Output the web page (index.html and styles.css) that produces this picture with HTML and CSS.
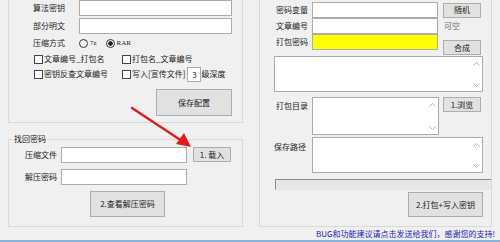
FILE: index.html
```html
<!DOCTYPE html>
<html lang="zh-CN">
<head>
  <meta charset="UTF-8">
  <title>打包工具</title>
  <link rel="stylesheet" href="styles.css">
</head>
<body>
<div class="app">
  <div class="panes">
    <!-- left side -->
    <div class="pane left">
      <div class="group config">
        <div class="field-row">
          <span class="lbl">算法密钥</span>
          <div class="box"></div>
        </div>
        <div class="field-row gap2">
          <span class="lbl">部分明文</span>
          <div class="box"></div>
        </div>
        <div class="option-row">
          <span class="lbl">压缩方式</span>
          <span class="radio"></span><span class="opt-text">7z</span>
          <span class="radio on"></span><span class="opt-text">RAR</span>
        </div>
        <div class="check-row r4">
          <span class="check"><i></i>文章编号_打包名</span>
          <span class="check"><i></i>打包名_文章编号</span>
        </div>
        <div class="check-row r5">
          <span class="check"><i></i>密钥反查文章编号</span>
          <span class="check"><i></i>写入[宣传文件]<span class="tiny-box">3</span>级深度</span>
        </div>
        <div class="btn-row">
          <button class="btn big">保存配置</button>
        </div>
      </div>

      <fieldset class="group recover">
        <legend>找回密码</legend>
        <div class="field-row">
          <span class="lbl">压缩文件</span>
          <div class="box file"></div>
          <button class="btn small load">1. 载入</button>
        </div>
        <div class="field-row gap6">
          <span class="lbl">解压密码</span>
          <div class="box file"></div>
        </div>
        <button class="btn big view">2.查看解压密码</button>
      </fieldset>
    </div>

    <!-- right side -->
    <div class="pane right">
      <div class="group pack">
        <div class="field-row">
          <span class="lbl">密码变量</span>
          <div class="box mid"></div>
          <button class="btn small">随机</button>
        </div>
        <div class="field-row">
          <span class="lbl">文章编号</span>
          <div class="box mid"></div>
          <span class="hint">可空</span>
        </div>
        <div class="field-row">
          <span class="lbl">打包密码</span>
          <div class="box mid yellow"></div>
          <button class="btn small low">合成</button>
        </div>
        <div class="memo full">
          <div class="memo-body"></div>
          <div class="scroll"><svg viewBox="0 0 7 4"><path d="M0.5 3.5L3.5 0.5L6.5 3.5"/></svg><svg viewBox="0 0 7 4"><path d="M0.5 0.5L3.5 3.5L6.5 0.5"/></svg></div>
        </div>
        <div class="memo-row dir">
          <span class="lbl top">打包目录</span>
          <div class="memo narrow">
            <div class="memo-body"></div>
            <div class="scroll"><svg viewBox="0 0 7 4"><path d="M0.5 3.5L3.5 0.5L6.5 3.5"/></svg><svg viewBox="0 0 7 4"><path d="M0.5 0.5L3.5 3.5L6.5 0.5"/></svg></div>
          </div>
          <button class="btn small">1.浏览</button>
        </div>
        <div class="memo-row save">
          <span class="lbl top flush">保存路径</span>
          <div class="memo wide">
            <div class="memo-body"></div>
            <div class="scroll"><svg viewBox="0 0 7 4"><path d="M0.5 3.5L3.5 0.5L6.5 3.5"/></svg><svg viewBox="0 0 7 4"><path d="M0.5 0.5L3.5 3.5L6.5 0.5"/></svg></div>
          </div>
        </div>
        <div class="progress"></div>
        <div class="btn-row">
          <button class="btn big pack-btn">2.打包+写入密钥</button>
        </div>
      </div>
    </div>
  </div>

  <div class="footer">BUG和功能建议请点击发送给我们，感谢您的支持!</div>

  <!-- red pointer drawn over the form -->
  <svg class="arrow" width="500" height="242" viewBox="0 0 500 242">
    <line x1="132" y1="108" x2="182" y2="141" stroke="#e01b1b" stroke-width="2.4" stroke-linecap="round"/>
    <polygon points="191,147 176,144 184,133" fill="#e01b1b"/>
  </svg>
</div>
</body>
</html>
```

FILE: styles.css
```css
* {
  box-sizing: border-box;
}
body {
  margin: 0;
  width: 500px;
  height: 242px;
  overflow: hidden;
  background-color: #f0f0f0;
  color: #1a1a1a;
  font-family: "Noto Sans CJK SC", "Noto Sans", sans-serif;
  font-size: 8px;
  line-height: 12px;
}
.app {
  position: relative;
  height: 242px;
  border-bottom: 2px solid #8cb3d4;
  overflow: hidden;
}
.panes {
  display: flex;
  gap: 16px;
  padding-left: 8px;
  height: 227px;
}
.pane {
  display: flex;
  flex-direction: column;
}
.pane.left {
  width: 235px;
}
.pane.right {
  width: 233px;
}
.group {
  border: 1px solid #d9d9d9;
}

/* controls */
.lbl {
  flex: none;
  white-space: nowrap;
}
.box {
  height: 16px;
  background-color: #fff;
  border: 1px solid #acacac;
}
.btn {
  display: block;
  margin: 0;
  padding: 0;
  font-family: inherit;
  font-size: 8px;
  line-height: 12px;
  color: #1a1a1a;
  background-color: #e1e1e1;
  border: 1px solid #adadad;
}
.btn.small {
  width: 38px;
  height: 15px;
}
.btn.big {
  width: 76px;
  height: 27px;
}
.field-row {
  display: flex;
  align-items: center;
  height: 16px;
}
.btn-row {
  display: flex;
  justify-content: flex-end;
}

/* top-left settings */
.config {
  margin-top: -12px;
  padding: 11px 10px 6px 24px;
}
.config .lbl {
  width: 46px;
}
.config .box {
  flex: 1;
}
.gap2 {
  margin-top: 2px;
}
.option-row {
  display: flex;
  align-items: center;
  height: 18px;
}
.radio {
  width: 9px;
  height: 9px;
  border: 1px solid #333;
  border-radius: 50%;
  background-color: #fff;
  margin-right: 2px;
}
.radio.on {
  background: radial-gradient(circle, #222 0 2px, #fff 2.5px);
}
.opt-text {
  font-family: "Liberation Serif", serif;
  font-size: 7px;
  margin-right: 9px;
}
.check-row {
  display: grid;
  grid-template-columns: 88px auto;
  align-items: center;
}
.check-row.r4 {
  height: 14px;
}
.check-row.r5 {
  height: 16px;
}
.check {
  display: flex;
  align-items: center;
  white-space: nowrap;
}
.check i {
  width: 9px;
  height: 9px;
  margin: 0 1px 0 1px;
  border: 1px solid #444;
  background-color: #fff;
}
.tiny-box {
  width: 14px;
  height: 15px;
  margin-left: 2px;
  background-color: #fff;
  border: 1px solid #acacac;
  text-align: center;
  line-height: 13px;
}
.config .btn-row {
  margin-top: 7px;
}

/* recover group */
.recover {
  margin: 10px 0 0 0;
  padding: 2px 10px 9px 3px;
  min-width: 0;
}
.recover legend {
  padding: 0 2px;
  line-height: 12px;
}
.recover .field-row {
  margin-left: 13px;
}
.recover .lbl {
  width: 36px;
}
.box.file {
  width: 126px;
}
.btn.load {
  margin-left: 6px;
  align-self: flex-start;
}
.gap6 {
  margin-top: 6px;
}
.btn.view {
  width: 75px;
  height: 26px;
  margin: 6px 0 0 78px;
}

/* right packing group */
.pack {
  margin-top: -12px;
  height: 239px;
  padding: 13px 8px 9px 14px;
  overflow: hidden;
}
.pack .lbl {
  width: 38px;
  padding-left: 2px;
}
.box.mid {
  width: 126px;
}
.box.yellow {
  background-color: #ffff00;
}
.pack .field-row .btn {
  margin-left: 5px;
}
.btn.low {
  align-self: flex-start;
  margin-top: 6px;
}
.hint {
  margin-left: 6px;
  color: #6d6d6d;
}
.memo {
  display: flex;
  background-color: #fff;
  border: 1px solid #acacac;
}
.memo-body {
  flex: 1;
}
.scroll {
  width: 12px;
  display: flex;
  flex-direction: column;
  justify-content: space-between;
  align-items: center;
  padding: 5px 0 4px;
}
.scroll svg {
  width: 7px;
  height: 4px;
  fill: none;
  stroke: #b4b4b4;
  stroke-width: 1;
}
.memo.full {
  margin-top: 6px;
  height: 36px;
}
.memo-row {
  display: flex;
  align-items: flex-start;
}
.lbl.top {
  padding-top: 3px;
}
.lbl.flush {
  padding-left: 0;
  padding-top: 4px;
}
.memo-row.dir {
  margin-top: 5px;
}
.memo.narrow {
  width: 127px;
  height: 38px;
}
.memo-row .btn {
  margin-left: 4px;
}
.memo-row.save {
  margin-top: 2px;
}
.memo.wide {
  width: 171px;
  height: 36px;
}
.progress {
  margin: 6px 0 0 1px;
  width: 230px;
  height: 11px;
  border-top: 1px solid #8a8a8a;
  border-left: 1px solid #8a8a8a;
  border-bottom: 1px solid #e6e6e6;
  background-color: #e6e6e6;
}
.pack .btn-row {
  margin-top: 2px;
}
.btn.pack-btn {
  width: 75px;
  height: 25px;
}

.footer {
  height: 13px;
  line-height: 13px;
  padding-right: 5px;
  text-align: right;
  color: #2020c0;
  white-space: nowrap;
}
.arrow {
  position: absolute;
  left: 0;
  top: 0;
  pointer-events: none;
}
```
